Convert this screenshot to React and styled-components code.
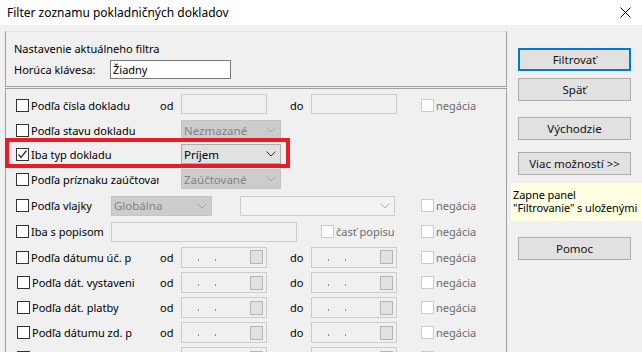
import styled, { createGlobalStyle } from "styled-components";

const GlobalStyle = createGlobalStyle`
  html, body {
    margin: 0;
    padding: 0;
    width: 642px;
    height: 352px;
    overflow: hidden;
    background: #f0f0f0;
  }
  body {
    font-family: "Noto Sans", "Liberation Sans", sans-serif;
    font-size: 11px;
    color: #000;
  }
  *, *::before, *::after { box-sizing: border-box; }
`;

// --- okno ---
const Window = styled.div`
  width: 642px;
  height: 352px;
  display: flex;
  flex-direction: column;
  overflow: hidden;
  background: #f0f0f0;
`;

const TitleBar = styled.div`
  height: 25px;
  flex: none;
  background: #fff;
  display: flex;
  align-items: center;
  justify-content: space-between;
  padding: 0 11px 0 7px;
  font-size: 12px;
`;

const Main = styled.div`
  flex: 1;
  min-height: 0;
  display: flex;
  padding: 6px 0 0 5px;
`;

const LeftColumn = styled.div`
  width: 502px;
  display: flex;
  flex-direction: column;
  gap: 1px;
`;

// --- horný box ---
const TopBox = styled.div`
  height: 56px;
  flex: none;
  border: 1px solid;
  border-color: #e3e3e3 #a0a0a0 #a0a0a0 #a0a0a0;
  padding: 8px 8px 0 8px;
  display: flex;
  flex-direction: column;
  gap: 5px;
`;

const Line = styled.div`
  height: 16px;
  display: flex;
  align-items: center;
  white-space: nowrap;
`;

const HotkeyLabel = styled.span`
  width: 96px;
`;

const HotkeyInput = styled.div`
  width: 121px;
  height: 19px;
  border: 1px solid #7a7a7a;
  background: #fff;
  padding-left: 2px;
  display: flex;
  align-items: center;
`;

// --- spodný panel ---
const Panel = styled.div`
  flex: 1;
  border: 1px solid #a0a0a0;
  border-bottom: none;
  padding-top: 3px;
  display: flex;
  flex-direction: column;
`;

const Row = styled.div`
  height: ${(p) => p.$h}px;
  flex: none;
  display: flex;
  align-items: center;
  padding-left: ${(p) => p.$indent || 10}px;
  position: relative;
  white-space: nowrap;

  ${(p) =>
    p.$highlight &&
    `
    &::after {
      content: "";
      position: absolute;
      left: -1px;
      top: -4px;
      width: 285px;
      height: 30px;
      border: 4px solid #ed1c24;
      pointer-events: none;
    }
  `}
`;

const Cell = styled.div`
  width: ${(p) => p.$w}px;
  flex: none;
  display: flex;
  align-items: center;
  gap: 2px;
  overflow: hidden;
`;

const Gap = styled.div`
  width: ${(p) => p.$w}px;
  flex: none;
`;

const BoxFrame = styled.div`
  width: 13px;
  height: 13px;
  flex: none;
  border: 1px solid ${(p) => (p.$disabled ? "#cccccc" : "#333333")};
  background: #fff;
  display: flex;
  align-items: center;
  justify-content: center;
`;

const LabelText = styled.span`
  display: block;
  max-width: ${(p) => (p.$max ? `${p.$max}px` : "none")};
  overflow: hidden;
  color: ${(p) => (p.$disabled ? "#6d6d6d" : "#000")};
`;

const Word = styled.span`
  width: 21px;
  flex: none;
`;

const TextBox = styled.div`
  width: ${(p) => p.$w}px;
  height: 20px;
  flex: none;
  margin-top: ${(p) => p.$mt || 0}px;
  border: 1px solid #cccccc;
  background: #f0f0f0;
`;

const Combo = styled.div`
  width: ${(p) => p.$w}px;
  height: 20px;
  flex: none;
  display: flex;
  align-items: center;
  justify-content: space-between;
  padding: 0 4px 0 2px;
  border: 1px solid
    ${(p) =>
      p.$variant === "active"
        ? "#adadad"
        : p.$variant === "empty"
        ? "#cccccc"
        : "#c4c4c4"};
  background: ${(p) =>
    p.$variant === "active"
      ? "#e1e1e1"
      : p.$variant === "empty"
      ? "#f3f3f3"
      : "#cccccc"};
  color: ${(p) => (p.$variant === "active" ? "#000" : "#838383")};
  font-size: 11.5px;
`;

const DateBox = styled.div`
  width: 86px;
  height: 21px;
  flex: none;
  border: 1px solid #cccccc;
  background: #f0f0f0;
  display: flex;
  align-items: center;
  padding: 0 3px 0 16px;
  gap: 16px;
`;

const Dot = styled.span`
  width: 1px;
  height: 2px;
  margin-top: 5px;
  background: #909090;
`;

const DateButton = styled.div`
  width: 13px;
  height: 14px;
  margin-left: auto;
  border: 1px solid #b5b5b5;
  background: #e1e1e1;
`;

// --- pravý stĺpec ---
const RightColumn = styled.div`
  width: 113px;
  margin-left: 11px;
  padding-top: 17px;
  display: flex;
  flex-direction: column;
`;

const Button = styled.div`
  height: 23px;
  flex: none;
  margin-top: ${(p) => p.$mt || 0}px;
  border: ${(p) => (p.$primary ? "2px solid #0078d7" : "1px solid #adadad")};
  background: #e1e1e1;
  display: flex;
  align-items: center;
  justify-content: center;
  font-size: 11.5px;
  color: #111;
`;

const Tip = styled.div`
  width: 131px;
  height: 38px;
  margin: 8px 0 0 -7px;
  padding: 5px 0 0 2px;
  background: #ffffe1;
  font-size: 11px;
  line-height: 13px;
  letter-spacing: -0.1px;
  white-space: nowrap;
  overflow: hidden;
`;

function Chevron({ color }) {
  return (
    <svg width="10" height="6" viewBox="0 0 10 6">
      <polyline points="0.5,0.5 5,5 9.5,0.5" fill="none" stroke={color} strokeWidth="1" />
    </svg>
  );
}

function Check({ checked, disabled, label, max }) {
  return (
    <>
      <BoxFrame $disabled={disabled}>
        {checked && (
          <svg width="11" height="11" viewBox="0 0 11 11">
            <polyline points="1.5,5.5 4,8.5 9.5,1.5" fill="none" stroke="#333" strokeWidth="1.3" />
          </svg>
        )}
      </BoxFrame>
      {label && (
        <LabelText $disabled={disabled} $max={max}>
          {label}
        </LabelText>
      )}
    </>
  );
}

function Negation() {
  return (
    <Cell $w={80}>
      <Check disabled label="negácia" />
    </Cell>
  );
}

function DateInput() {
  return (
    <DateBox>
      <Dot />
      <Dot />
      <DateButton />
    </DateBox>
  );
}

function DateRow({ label, h, indent }) {
  return (
    <Row $h={h} $indent={indent}>
      <Cell $w={indent ? 143 : 144}>
        <Check label={label} max={102} />
      </Cell>
      <Word>od</Word>
      <DateInput />
      <Gap $w={23} />
      <Word>do</Word>
      <DateInput />
      <Gap $w={24} />
      <Negation />
    </Row>
  );
}

export default function App() {
  return (
    <Window>
      <GlobalStyle />
      <TitleBar>
        <span>Filter zoznamu pokladničných dokladov</span>
        <svg width="11" height="11" viewBox="0 0 11 11">
          <path d="M0.5 0.5 L10.5 10.5 M10.5 0.5 L0.5 10.5" stroke="#000" strokeWidth="1" />
        </svg>
      </TitleBar>
      <Main>
        <LeftColumn>
          <TopBox>
            <Line>Nastavenie aktuálneho filtra</Line>
            <Line>
              <HotkeyLabel>Horúca klávesa:</HotkeyLabel>
              <HotkeyInput>Žiadny</HotkeyInput>
            </Line>
          </TopBox>
          <Panel>
            <Row $h={26}>
              <Cell $w={144}>
                <Check label="Podľa čísla dokladu" />
              </Cell>
              <Word>od</Word>
              <TextBox $w={86} $mt={-3} />
              <Gap $w={23} />
              <Word>do</Word>
              <TextBox $w={86} $mt={-3} />
              <Gap $w={24} />
              <Negation />
            </Row>
            <Row $h={24}>
              <Cell $w={165}>
                <Check label="Podľa stavu dokladu" />
              </Cell>
              <Combo $w={100}>
                Nezmazané
                <Chevron color="#a8a8a8" />
              </Combo>
            </Row>
            <Row $h={24} $highlight>
              <Cell $w={165}>
                <Check checked label="Iba typ dokladu" />
              </Cell>
              <Combo $w={100} $variant="active">
                Príjem
                <Chevron color="#333" />
              </Combo>
            </Row>
            <Row $h={26}>
              <Cell $w={165}>
                <Check label="Podľa príznaku zaúčtovani" max={128} />
              </Cell>
              <Combo $w={100}>
                Zaúčtované
                <Chevron color="#a8a8a8" />
              </Combo>
            </Row>
            <Row $h={27}>
              <Cell $w={95}>
                <Check label="Podľa vlajky" />
              </Cell>
              <Combo $w={101}>
                Globálna
                <Chevron color="#a8a8a8" />
              </Combo>
              <Gap $w={28} />
              <Combo $w={155} $variant="empty">
                <span />
                <Chevron color="#b0b0b0" />
              </Combo>
              <Gap $w={26} />
              <Negation />
            </Row>
            <Row $h={25}>
              <Cell $w={95}>
                <Check label="Iba s popisom" />
              </Cell>
              <TextBox $w={186} />
              <Gap $w={24} />
              <Cell $w={100}>
                <Check disabled label="časť popisu" />
              </Cell>
              <Negation />
            </Row>
            <DateRow h={26} label="Podľa dátumu úč. p" />
            <DateRow h={25} indent={11} label="Podľa dát. vystaveni" />
            <DateRow h={25} indent={11} label="Podľa dát. platby" />
            <DateRow h={25} indent={11} label="Podľa dátumu zd. p" />
            <DateRow h={25} indent={11} label="Podľa dátumu spl." />
          </Panel>
        </LeftColumn>
        <RightColumn>
          <Button $primary>Filtrovať</Button>
          <Button $mt={7}>Späť</Button>
          <Button $mt={16}>Východzie</Button>
          <Button $mt={12}>Viac možností &gt;&gt;</Button>
          <Tip>
            Zapne panel
            <br />
            "Filtrovanie" s uloženými
          </Tip>
          <Button $mt={16}>Pomoc</Button>
        </RightColumn>
      </Main>
    </Window>
  );
}
